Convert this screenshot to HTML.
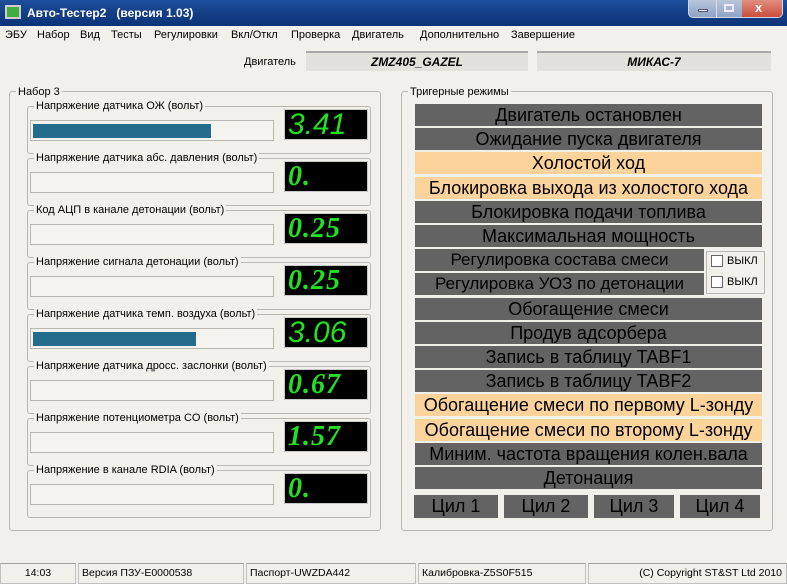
<!DOCTYPE html>
<html><head><meta charset="utf-8"><style>
*{box-sizing:border-box;margin:0;padding:0}
body{width:787px;height:584px;overflow:hidden;background:#f1f0ea;font-family:"Liberation Sans","DejaVu Sans",sans-serif;position:relative;font-size:11px;color:#000}
.a{position:absolute}
.title{left:0;top:0;width:787px;height:26px;background:linear-gradient(#1d4f9c,#15418a 40%,#0c3378);color:#fff;font-weight:bold;font-size:12px}
.gb{border:1px solid #b9b8b0;border-radius:3px}
.lbl{background:#f1f0ea;padding:0 2px;font-size:11px;line-height:12px;white-space:nowrap}
.bar{border:1px solid #b9b8b0;background:#f4f3ee}
.fill{background:#246c8c}
.lcd{background:#000;color:#22e022;font-style:italic;font-size:28px;line-height:30px;padding-left:3px;border:1px solid #c8c8c8}
.serif{font-family:"Liberation Serif",serif;font-weight:bold;letter-spacing:1px}
.sans{font-family:"Liberation Sans",sans-serif;font-size:30px}
.btn{background:#636363;text-align:center;font-size:18px;line-height:22px;height:22px;color:#000;white-space:nowrap;overflow:hidden}
.or{background:#fdd39c}
.sb{top:563px;height:21px;border:1px solid #c0c0c0;border-top-color:#a0a0a0;font-size:10.5px;line-height:19px;white-space:nowrap;padding-left:3px}
.cb{width:12px;height:12px;border:1px solid #666;background:#fff;display:inline-block;vertical-align:middle;margin-right:4px}
</style></head><body>
<div class="a title">
 <div class="a" style="left:5px;top:5px;width:16px;height:14px;background:#3fae3f;border:2px solid #ccc"></div>
 <div class="a" style="left:27px;top:6px">Авто-Тестер2&nbsp;&nbsp;&nbsp;(версия 1.03)</div>
 <div class="a" style="left:688px;top:0;width:95px;height:18px;border:1px solid #d0d8e8;border-top:none;border-radius:0 0 5px 5px;background:linear-gradient(#b8c6dc,#8fa3c4);overflow:hidden">
  <div class="a" style="left:27px;top:0;width:1px;height:18px;background:#dde"></div>
  <div class="a" style="left:53px;top:0;width:41px;height:18px;background:linear-gradient(#e28f80,#c8483a)"></div>
  <div class="a" style="left:9px;top:9px;width:10px;height:3px;background:#fff;border:1px solid #557"></div>
  <div class="a" style="left:35px;top:4px;width:10px;height:8px;border:2px solid #eef"></div>
  <div class="a" style="left:66px;top:0px;color:#fff;font-size:13px;font-weight:bold">x</div>
 </div>
</div>
<div class="a" style="left:5px;top:29px">ЭБУ</div>
<div class="a" style="left:37px;top:29px">Набор</div>
<div class="a" style="left:80px;top:29px">Вид</div>
<div class="a" style="left:111px;top:29px">Тесты</div>
<div class="a" style="left:154px;top:29px">Регулировки</div>
<div class="a" style="left:231px;top:29px">Вкл/Откл</div>
<div class="a" style="left:291px;top:29px">Проверка</div>
<div class="a" style="left:352px;top:29px">Двигатель</div>
<div class="a" style="left:420px;top:29px">Дополнительно</div>
<div class="a" style="left:511px;top:29px">Завершение</div>
<div class="a" style="left:244px;top:56px">Двигатель</div>
<div class="a" style="left:306px;top:51px;width:222px;height:20px;background:#e2e1dc;border-top:2px solid #a9a9a9;text-align:center;font-style:italic;font-weight:bold;font-size:12px;line-height:18px">ZMZ405_GAZEL</div>
<div class="a" style="left:537px;top:51px;width:234px;height:20px;background:#e2e1dc;border-top:2px solid #a9a9a9;text-align:center;font-style:italic;font-weight:bold;font-size:12px;line-height:18px">МИКАС-7</div>

<div class="a gb" style="left:9px;top:91px;width:372px;height:440px"></div>
<div class="a lbl" style="left:16px;top:86px">Набор 3</div>

<div class="a gb" style="left:401px;top:91px;width:372px;height:440px"></div>
<div class="a lbl" style="left:408px;top:86px">Тригерные режимы</div>

<div id="L"></div>
<script>
var d=[["Напряжение датчика ОЖ (вольт)","3.41",178,"sans"],["Напряжение датчика абс. давления (вольт)","0.",0,"serif"],["Код АЦП в канале детонации (вольт)","0.25",0,"serif"],["Напряжение сигнала детонации (вольт)","0.25",0,"serif"],["Напряжение датчика темп. воздуха (вольт)","3.06",163,"sans"],["Напряжение датчика дросс. заслонки (вольт)","0.67",0,"serif"],["Напряжение потенциометра CO (вольт)","1.57",0,"serif"],["Напряжение в канале RDIA (вольт)","0.",0,"serif"]];
var h="";
d.forEach(function(r,i){var y=106+i*52;
h+='<div class="a gb" style="left:27px;top:'+y+'px;width:344px;height:48px"></div>';
h+='<div class="a lbl" style="left:34px;top:'+(y-6)+'px">'+r[0]+'</div>';
h+='<div class="a bar" style="left:30px;top:'+(y+14)+'px;width:244px;height:21px">'+(r[2]?'<div class="a fill" style="left:2px;top:3px;width:'+r[2]+'px;height:14px"></div>':'')+'</div>';
h+='<div class="a lcd '+r[3]+'" style="left:284px;top:'+(y+3)+'px;width:84px;height:31px">'+r[1]+'</div>';});
var b=[["Двигатель остановлен",0],["Ожидание пуска двигателя",0],["Холостой ход",1],["Блокировка выхода из холостого хода",1],["Блокировка подачи топлива",0],["Максимальная мощность",0],["Регулировка состава смеси",0,1],["Регулировка УОЗ по детонации",0,1],["Обогащение смеси",0],["Продув адсорбера",0],["Запись в таблицу TABF1",0],["Запись в таблицу TABF2",0],["Обогащение смеси по первому L-зонду",1],["Обогащение смеси по второму L-зонду",1],["Миним. частота вращения колен.вала",0],["Детонация",0]];
b.forEach(function(r,i){var y=Math.round(104+i*24.2);
h+='<div class="a btn'+(r[1]?' or':'')+'" style="left:415px;top:'+y+'px;width:'+(r[2]?289:347)+'px'+(r[2]?';font-size:17px':'')+'">'+r[0]+'</div>';});
h+='<div class="a gb" style="left:706px;top:251px;width:59px;height:43px;border-radius:0"></div>';
h+='<div class="a" style="left:711px;top:255px;font-size:11px"><span class="cb"></span>ВЫКЛ</div>';
h+='<div class="a" style="left:711px;top:276px;font-size:11px"><span class="cb"></span>ВЫКЛ</div>';
[[414,84],[504,84],[594,80],[680,80]].forEach(function(c,i){h+='<div class="a btn" style="left:'+c[0]+'px;top:495px;width:'+c[1]+'px;height:23px;line-height:23px">Цил '+(i+1)+'</div>';});
document.getElementById("L").innerHTML=h;
</script>

<div class="a sb" style="left:0;width:76px;text-align:center;padding:0">14:03</div>
<div class="a sb" style="left:78px;width:166px">Версия ПЗУ-E0000538</div>
<div class="a sb" style="left:246px;width:170px">Паспорт-UWZDA442</div>
<div class="a sb" style="left:418px;width:168px">Калибровка-Z5S0F515</div>
<div class="a sb" style="left:588px;width:199px;text-align:right;padding-right:4px">(C) Copyright ST&amp;ST Ltd 2010</div>
</body></html>
